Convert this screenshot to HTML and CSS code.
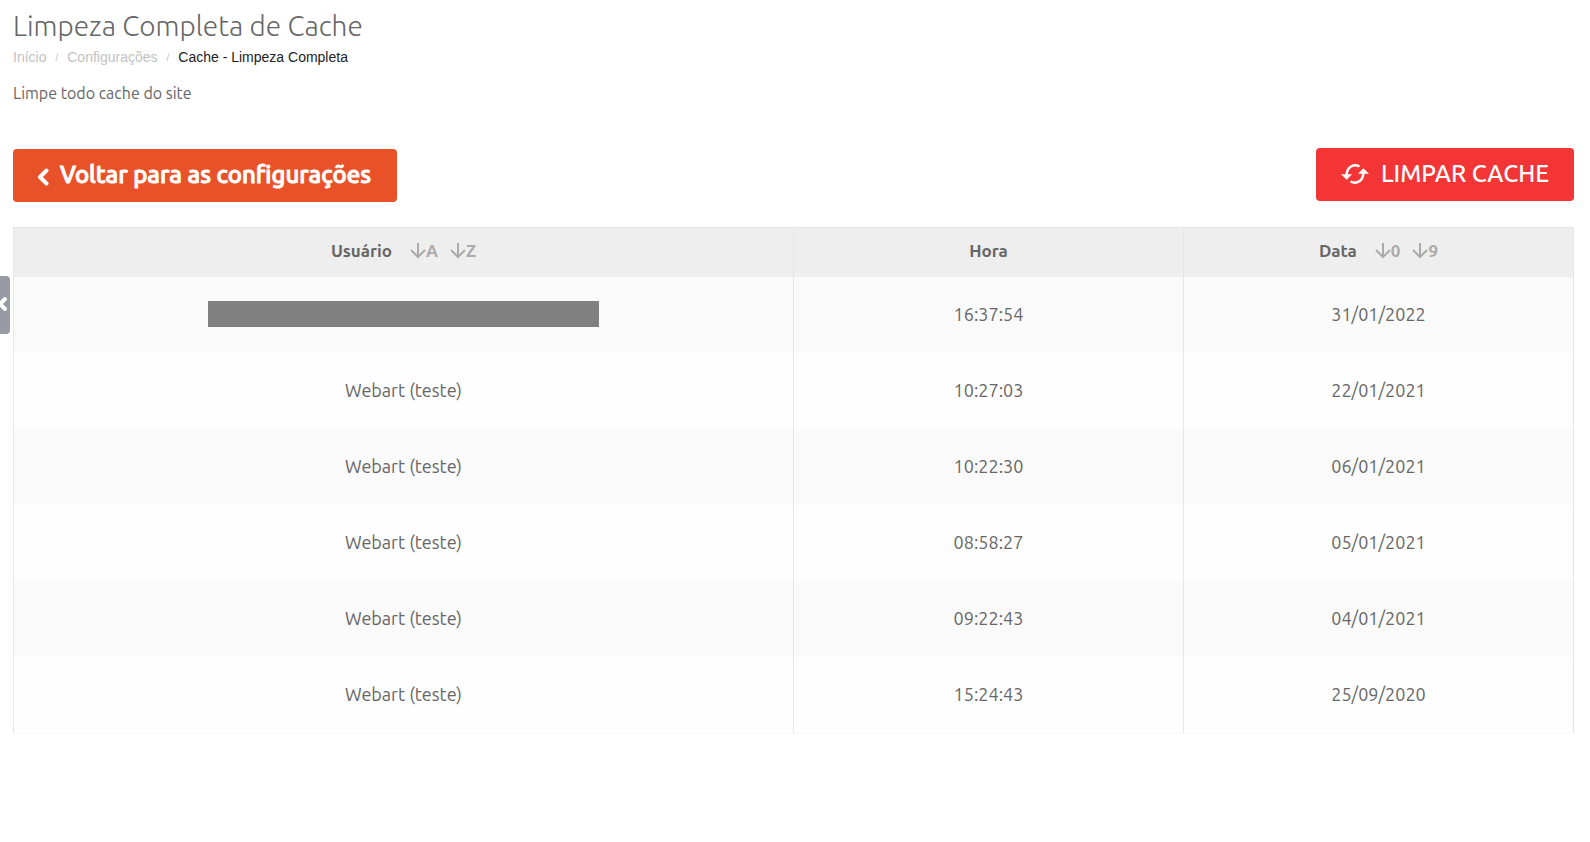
FILE: index.html
```html
<!DOCTYPE html>
<html lang="pt-BR">
<head>
<meta charset="utf-8">
<title>Limpeza Completa de Cache</title>
<link rel="stylesheet" href="styles.css">
</head>
<body>
<button class="drawer" type="button" aria-label="Abrir menu"><svg class="drawer-icon" viewBox="0 0 12 16"><path d="M9 3 4 8l5 5"/></svg></button>
<main class="page">
  <header class="heading">
    <h1 class="title">Limpeza Completa de Cache</h1>
    <nav class="crumbs" aria-label="Navegação">
      <a class="crumb" href="#">Início</a><span class="slash">/</span><a class="crumb" href="#">Configurações</a><span class="slash">/</span><span class="current">Cache - Limpeza Completa</span>
    </nav>
    <p class="lead">Limpe todo cache do site</p>
  </header>
  <div class="actions">
    <a class="btn btn-back" href="#"><svg class="back-icon" viewBox="0 0 12 18"><path d="M9.500 2.500 3 9l6.500 6.500"/></svg>Voltar para as configurações</a>
    <button class="btn btn-clear" type="button"><svg class="sync-icon" viewBox="0 0 28 20"><path class="arc" d="M18.500 2.500C12 -.8 5.700 3.500 5.700 11M9.500 17.500c6.500 3.300 12.800-1 12.800-8.500"/><path class="tip" d="M0 10.300h11L5.700 15.800zM17 9.700h11L22.300 4.200z"/></svg>LIMPAR CACHE</button>
  </div>
  <table class="log">
    <thead>
      <tr>
        <th class="col-user"><div class="head">Usuário<span class="sorts"><button class="sort" type="button"><svg class="down" viewBox="0 0 16 16"><path d="M8 0v14M1 7l7 7 7-7"/></svg>A</button><button class="sort" type="button"><svg class="down" viewBox="0 0 16 16"><path d="M8 0v14M1 7l7 7 7-7"/></svg>Z</button></span></div></th>
        <th><div class="head">Hora</div></th>
        <th><div class="head">Data<span class="sorts"><button class="sort" type="button"><svg class="down" viewBox="0 0 16 16"><path d="M8 0v14M1 7l7 7 7-7"/></svg>0</button><button class="sort" type="button"><svg class="down" viewBox="0 0 16 16"><path d="M8 0v14M1 7l7 7 7-7"/></svg>9</button></span></div></th>
      </tr>
    </thead>
    <tbody>
      <tr><td><div class="redacted"></div></td><td>16:37:54</td><td>31/01/2022</td></tr>
      <tr><td>Webart (teste)</td><td>10:27:03</td><td>22/01/2021</td></tr>
      <tr><td>Webart (teste)</td><td>10:22:30</td><td>06/01/2021</td></tr>
      <tr><td>Webart (teste)</td><td>08:58:27</td><td>05/01/2021</td></tr>
      <tr><td>Webart (teste)</td><td>09:22:43</td><td>04/01/2021</td></tr>
      <tr><td>Webart (teste)</td><td>15:24:43</td><td>25/09/2020</td></tr>
    </tbody>
  </table>
</main>
</body>
</html>
```
FILE: styles.css
```css
* { box-sizing: border-box; }
body { margin: 0; background: #fff; color: #666; font: 18px/26px Ubuntu, "Noto Sans", sans-serif; }
button { font: inherit; color: inherit; border: 0; padding: 0; background: none; cursor: pointer; }
a { text-decoration: none; }
svg { fill: none; stroke: currentColor; flex: none; }
.page { padding: 8px 16px 0 13px; }
.title { margin: 0; font-size: 28px; line-height: 36px; font-weight: 300; }
.crumbs { display: flex; gap: 9px; font: 14px/20px "Liberation Sans", Arial, sans-serif; margin-top: 3px; }
.crumb { color: #c2c2c2; }
.slash { color: #c2c2c2; font-size: 10px; line-height: 22px; }
.current { color: #222; }
.lead { margin: 11px 0 0; font-size: 16px; }
.actions { display: flex; justify-content: space-between; align-items: flex-start; margin-top: 42px; }
.btn { display: flex; align-items: center; height: 53px; border-radius: 4px; color: #fff; font-size: 24px; font-weight: 500; white-space: nowrap; }
.btn-back { gap: 11px; padding: 0 26px 2px 24px; margin-top: 1px; background: #e95228; -webkit-text-stroke: 1px #fff; }
.btn-clear { gap: 12px; padding: 0 25px 2px; background: #f33535; }
.back-icon { width: 12px; height: 18px; stroke-width: 4; stroke-linecap: round; stroke-linejoin: round; margin-top: 4px; }
.sync-icon { width: 28px; height: 20px; }
.arc { stroke-width: 2.500; }
.tip { fill: currentColor; stroke: none; }
.log { width: 100%; table-layout: fixed; border-collapse: separate; border-spacing: 0; margin-top: 25px; border: 1px solid #e6e6e6; border-right: 0; border-bottom-color: #f7f7f7; text-align: center; }
.col-user { width: 50%; }
th { height: 49px; padding: 0 0 3px; background: #eee; border-right: 1px solid #e6e6e6; font-size: 17px; font-weight: 600; }
td { height: 76px; padding: 0 0 2px; border-right: 1px solid #e6e6e6; background: #fefefe; }
tbody tr:nth-child(odd) td { background: #fafafa; }
.head, .sorts, .sort { display: flex; align-items: center; justify-content: center; }
.head { gap: 18px; }
.sorts { gap: 12px; }
.sort { color: #aaa; }
.down { width: 16px; height: 16px; stroke-width: 2; }
.redacted { width: 391px; max-width: 100%; height: 26px; margin: 0 auto; background: #808080; }
.drawer { position: absolute; left: 0; top: 276px; width: 10px; height: 58px; border-radius: 0 4px 4px 0; background: #9799a3; color: #fff; overflow: hidden; display: flex; align-items: center; justify-content: flex-end; padding: 0 2px 2px 0; }
.drawer-icon { width: 12px; height: 16px; stroke-width: 4; stroke-linecap: round; }
```
